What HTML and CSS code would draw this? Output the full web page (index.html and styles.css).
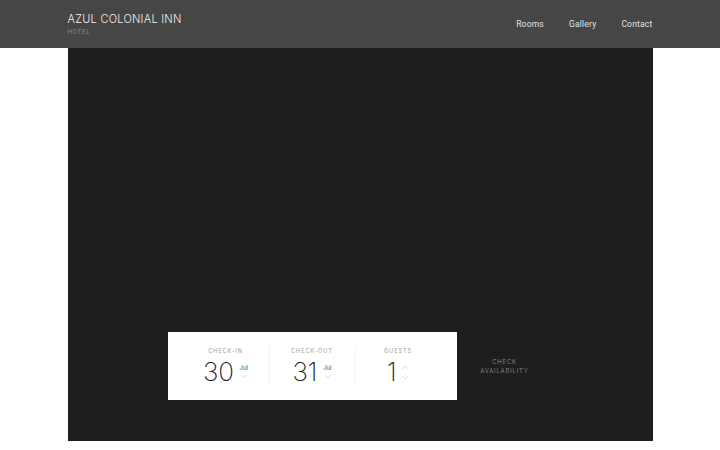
FILE: index.html
```html
<!DOCTYPE html>
<html>
<head>
<meta charset="utf-8">
<link rel="stylesheet" href="styles.css">
</head>
<body>
<header class="topbar">
  <div class="topbar-inner">
    <div class="brand">
      <div class="brand-name">AZUL COLONIAL INN</div>
      <div class="brand-sub">HOTEL</div>
    </div>
    <nav class="nav">
      <a class="nav-link">Rooms</a>
      <span class="nav-sep"></span>
      <a class="nav-link">Gallery</a>
      <span class="nav-sep"></span>
      <a class="nav-link">Contact</a>
    </nav>
  </div>
</header>
<main class="hero">
  <div class="booking">
    <div class="booking-box">
      <div class="field">
        <div class="field-label">CHECK-IN</div>
        <div class="field-value">
          <span class="big">30</span>
          <span class="side">
            <span class="month">Jul</span>
            <svg class="chev" viewBox="0 0 8 5"><path d="M1 1l3 3 3-3" fill="none" stroke="#c4c4c4" stroke-width="0.8"/></svg>
          </span>
        </div>
      </div>
      <div class="field divided">
        <div class="field-label">CHECK-OUT</div>
        <div class="field-value">
          <span class="big">31</span>
          <span class="side">
            <span class="month">Jul</span>
            <svg class="chev" viewBox="0 0 8 5"><path d="M1 1l3 3 3-3" fill="none" stroke="#c4c4c4" stroke-width="0.8"/></svg>
          </span>
        </div>
      </div>
      <div class="field divided">
        <div class="field-label">GUESTS</div>
        <div class="field-value">
          <span class="big">1</span>
          <span class="side arrows">
            <svg class="chev" viewBox="0 0 8 5"><path d="M1 4l3-3 3 3" fill="none" stroke="#c4c4c4" stroke-width="0.8"/></svg>
            <svg class="chev" viewBox="0 0 8 5"><path d="M1 1l3 3 3-3" fill="none" stroke="#c4c4c4" stroke-width="0.8"/></svg>
          </span>
        </div>
      </div>
    </div>
    <div class="check-btn">CHECK<br>AVAILABILITY</div>
  </div>
</main>
</body>
</html>
```
FILE: styles.css
```css
html, body {
  margin: 0;
  padding: 0;
  background: #ffffff;
  font-family: Inter, "Liberation Sans", sans-serif;
}
.topbar {
  background: #464646;
  height: 48px;
}
.topbar-inner {
  width: 585px;
  margin: 0 auto;
  height: 48px;
  display: flex;
  justify-content: space-between;
  align-items: center;
}
.brand {
  display: flex;
  flex-direction: column;
  margin-top: -2px;
}
.brand-name {
  color: #f0f0f0;
  font-size: 11px;
  font-weight: 300;
  letter-spacing: 0.25px;
  line-height: 14px;
}
.brand-sub {
  color: #8a8a8a;
  font-size: 6px;
  letter-spacing: 0.6px;
  margin-top: 2px;
  line-height: 7px;
}
.nav {
  display: flex;
  align-items: center;
  gap: 12px;
}
.nav-link {
  color: #e2e2e2;
  font-size: 8.5px;
  letter-spacing: 0.2px;
  font-family: Roboto, "Liberation Sans", sans-serif;
}
.nav-sep {
  width: 1px;
  height: 12px;
  background: #4b4b4b;
}
.hero {
  width: 585px;
  height: 393px;
  margin: 0 auto;
  background: #1e1e1e;
  display: flex;
  flex-direction: column;
  justify-content: flex-end;
}
.booking {
  display: flex;
  align-items: center;
  margin-left: 100px;
  margin-bottom: 41px;
}
.booking-box {
  width: 289px;
  height: 68px;
  box-sizing: border-box;
  background: #ffffff;
  display: flex;
  align-items: center;
  padding: 0 16px 0 15px;
}
.field {
  width: 86px;
  height: 40px;
  box-sizing: border-box;
  display: flex;
  flex-direction: column;
  align-items: center;
}
.divided {
  border-left: 1px solid #f3f3f3;
}
.field-label {
  font-size: 5.5px;
  letter-spacing: 1px;
  color: #9a9a9a;
  line-height: 7px;
  margin-top: 2px;
}
.field-value {
  display: flex;
  align-items: center;
  margin-top: 3px;
  gap: 6px;
}
.big {
  font-size: 26px;
  font-weight: 200;
  color: #1e1e1e;
  line-height: 28px;
  letter-spacing: -0.3px;
}
.side {
  display: flex;
  flex-direction: column;
  align-items: center;
  gap: 3px;
  margin-top: -1px;
}
.arrows {
  gap: 5px;
  margin-top: 0;
}
.month {
  font-size: 6px;
  color: #555;
  line-height: 7px;
}
.chev {
  width: 7px;
  height: 5px;
  display: block;
}
.check-btn {
  width: 96px;
  text-align: center;
  color: #9c9c9c;
  font-size: 6px;
  font-weight: 300;
  letter-spacing: 0.8px;
  line-height: 9px;
}
```
